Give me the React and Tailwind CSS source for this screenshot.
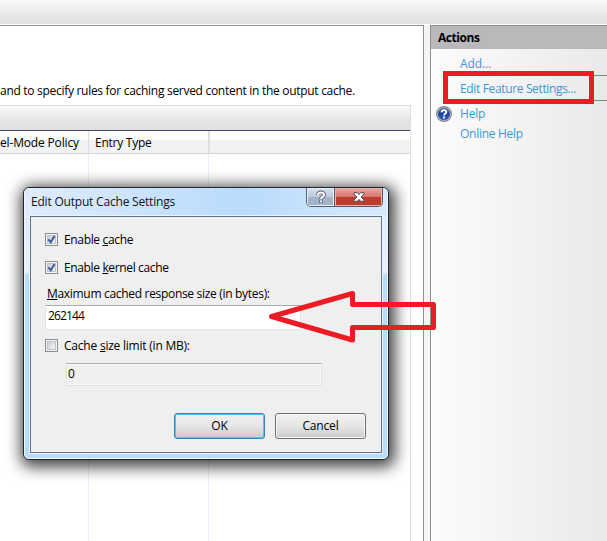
import React from "react";

function CheckBox({ checked }) {
  return (
    <span className="flex h-[13px] w-[13px] shrink-0 border border-[#8b8d90] bg-[#f4f4f4] p-px">
      <span className="flex h-[9px] w-[9px] border border-[#bfc2c6] bg-linear-to-br from-[#c8ccd2] to-[#f6f6f6]">
        {checked && (
          <svg viewBox="0 0 9 9" className="-m-px h-[9px] w-[9px] shrink-0" fill="none">
            <path d="M1.3 4.3 3.8 7.2 7.5 1" stroke="#3f59a3" strokeWidth="2" />
          </svg>
        )}
      </span>
    </span>
  );
}

function HelpIcon() {
  return (
    <svg viewBox="0 0 16 16" className="h-4 w-4 shrink-0">
      <defs>
        <linearGradient id="help" x1="0" y1="0" x2="0" y2="1">
          <stop offset="0" stopColor="#5f86d8" />
          <stop offset=".5" stopColor="#1c3f9f" />
          <stop offset="1" stopColor="#3c6ad4" />
        </linearGradient>
      </defs>
      <circle cx="8" cy="8" r="7.4" fill="#dcdcdc" stroke="#85878b" strokeWidth="1.2" />
      <circle cx="8" cy="8" r="5.9" fill="url(#help)" stroke="#25408d" strokeWidth=".6" />
      <path d="M5.7 6.3C5.8 3.4 10.5 3.6 10.3 6.2 10.2 7.8 8 7.6 8 9.5M8 10.6v1.8" fill="none" stroke="#fff" strokeWidth="1.8" />
    </svg>
  );
}

function Actions() {
  return (
    <aside className="flex w-[177px] shrink-0 flex-col border-t border-l border-[#8e9192] bg-linear-to-r from-[#fcfcfc] to-[#e9e9e9] text-[#3a98d6]">
      <h2 className="h-[23px] bg-[#bbb8bb] pl-[7px] text-[12px] leading-[24px] font-bold tracking-[-0.45px] text-black">Actions</h2>
      <div className="flex h-[26px] items-center pt-[3px] pl-[29px] tracking-[-0.1px]">Add...</div>
      <div className="ml-1 h-px bg-linear-to-r from-transparent via-[#909090] via-30% to-[#858585]" />
      <div className="flex h-6 items-center pt-[2px] pl-[29px] tracking-[-0.35px]">Edit Feature Settings...</div>
      <div className="ml-1 h-px bg-linear-to-r from-transparent via-[#909090] via-30% to-[#858585]" />
      <div className="flex h-[25px] items-center gap-2 pt-[1px] pl-[5px] tracking-[-0.2px]"><HelpIcon />Help</div>
      <div className="flex h-4 items-center pl-[29px] tracking-[-0.28px]">Online Help</div>
    </aside>
  );
}

function Dialog() {
  return (
    <section className="absolute top-[187px] left-[23px] flex h-[273px] w-[366px] flex-col rounded-[6px] border border-[#20252d] bg-[#badcfb] bg-linear-to-b from-[#d9e9fb] via-[#e9f2fc] via-31% to-[#badcfb] to-32% shadow-[2px_3px_15px_4px_rgba(0,0,0,0.75)]">
      <div className="flex flex-1 flex-col rounded-[5px] border border-[#f0f7ff] px-[5px] pb-[5px]">
        <header className="-mt-px -mr-[5px] -ml-[5px] flex h-[28px] shrink-0 justify-between rounded-t-[5px] bg-linear-to-r from-[#e0ecfb] via-[#b9dbfc] via-60% to-[#d8eafb] pl-[6px]">
          <h1 className="mt-[6px] text-[12px] leading-4 tracking-[-0.2px] text-[#10151c]">Edit Output Cache Settings</h1>
          <div className="mr-[4px] flex h-[19px] w-[77px] overflow-hidden rounded-b-[5px] border border-t-0 border-[#525e70]">
            <div className="flex w-[28px] items-center justify-center border-r border-[#525e70] bg-linear-to-b from-[#d7e1ee] via-[#bac8d8] via-50% to-[#a3b4c9] to-51% shadow-[inset_0_0_0_1px_#e8f2fc]">
              <svg viewBox="0 0 12 14" className="h-[14px] w-3" fill="none">
                <path d="M3 5C3 1.5 9 1.5 9 5 9 7 6 6.9 6 9.2M6 10.4v2.4" stroke="#4f5668" strokeWidth="3.8" />
                <path d="M3 5C3 1.5 9 1.5 9 5 9 7 6 6.9 6 9M6 10.5v1.7" stroke="#fff" strokeWidth="2" />
              </svg>
            </div>
            <div className="flex flex-1 items-center justify-center bg-linear-to-b from-[#e8aaa4] via-[#d4756b] via-48% to-[#be3c2c] to-50% shadow-[inset_0_0_0_1px_#efb0a8]">
              <svg viewBox="0 0 12 10" className="h-[10px] w-3">
                <path d="M1 .7h3.5L6 2.6 7.5.7H11v1.2L8.2 5 11 8.1v1.2H7.5L6 7.4 4.5 9.3H1V8.1L3.8 5 1 1.9z" fill="#fff" stroke="#534b59" strokeWidth="1" />
              </svg>
            </div>
          </div>
        </header>
        <div className="flex w-[352px] flex-1 flex-col border border-[#60738a] bg-[#efefef] pl-[14px] shadow-[0_0_0_1px_#eaf4ff]">
          <label className="mt-4 flex h-[13px] items-center gap-[6px] tracking-[-0.34px]"><CheckBox checked /><span>Enable <u>c</u>ache</span></label>
          <label className="mt-[15px] flex h-[13px] items-center gap-[6px] tracking-[-0.36px]"><CheckBox checked /><span>Enable <u>k</u>ernel cache</span></label>
          <div className="mt-3 ml-[2px] h-4 leading-4 tracking-[-0.31px]"><u>M</u>aximum cached response size (in bytes):</div>
          <div className="mt-[3px] h-[25px] w-[256px] border border-[#e2e3ea] border-t-[#abadb3] bg-white pl-[2px] leading-[20px] tracking-[-0.87px]">262144</div>
          <label className="mt-[9px] flex h-[13px] items-center gap-[6px] tracking-[-0.22px]"><CheckBox /><span>Cache <u>s</u>ize limit (in MB):</span></label>
          <div className="mt-[11px] ml-[21px] h-[23px] w-[256px] border border-[#dfe0e5] border-t-[#abadb3] pl-[1px] leading-[20px] shadow-[inset_0_0_0_1px_#fafafa]">0</div>
          <div className="mt-[27px] ml-[129px] flex gap-[10px]">
            <button className="h-[26px] w-[91px] rounded-[3px] border border-[#3c7fb1] bg-linear-to-b from-[#f1f1f1] via-[#e6e6e6] via-49% to-[#c9c9c9] to-100% shadow-[inset_0_0_0_1px_#42cdf5]">OK</button>
            <button className="h-[26px] w-[91px] rounded-[3px] border border-[#707070] bg-linear-to-b from-[#f2f2f2] via-[#e6e6e6] via-49% to-[#cbcbcb] to-100% tracking-[-0.16px] shadow-[inset_0_0_0_1px_#f7f7f7]">Cancel</button>
          </div>
        </div>
      </div>
    </section>
  );
}

export default function App() {
  return (
    <div className="relative flex h-[541px] w-[607px] flex-col overflow-hidden bg-[#f5f5f5] font-['Open_Sans','Noto_Sans',sans-serif] text-[12px] leading-4 text-black">
      <div className="h-[25px] shrink-0 border-b border-white bg-linear-to-b from-[#f9f9f9] to-[#e2e0e1]" />
      <div className="flex flex-1">
        <main className="flex w-[424px] shrink-0 flex-col border-t border-r border-[#8e9192] bg-white">
          <p className="mt-[57px] h-4 whitespace-nowrap tracking-[-0.29px]">and to specify rules for caching served content in the output cache.</p>
          <div className="mt-[6px] flex w-[411px] flex-1 flex-col border-t border-r border-[#dedede]">
            <div className="h-[25px] border-b border-[#45456f] bg-linear-to-b from-[#fbfbfb] via-[#e9e7e9] via-50% to-[#e2e0e2]" />
            <div className="flex h-[23px] border-b border-[#d5d5d5] bg-linear-to-b from-white via-white via-38% to-[#f1f2f4] to-40% leading-[23px]">
              <div className="w-[89px] border-r border-[#dedfe1] whitespace-nowrap tracking-[-0.16px]">el-Mode Policy</div>
              <div className="w-[121px] border-r-2 border-[#dedfe1] pl-[6px] tracking-[-0.25px]">Entry Type</div>
            </div>
            <div className="flex flex-1">
              <div className="w-[89px] border-r border-[#e5effb]" />
              <div className="w-[120px] border-r border-[#e5effb]" />
            </div>
          </div>
        </main>
        <div className="w-[6px] shrink-0 bg-[#f5f5f5]" />
        <Actions />
      </div>
      <Dialog />
      <div className="absolute top-[71px] left-[443px] h-[33px] w-[151px] border-5 border-[#ed1c24]" />
      <svg className="absolute top-[285px] left-[265px] h-[65px] w-[180px]" viewBox="265 285 180 65" fill="none">
        <path d="M271.5 316.5 352.5 293.5V304.5H433.5V327.5H352.5V340Z" stroke="#ed1c24" strokeWidth="5" strokeLinejoin="round" />
      </svg>
    </div>
  );
}
